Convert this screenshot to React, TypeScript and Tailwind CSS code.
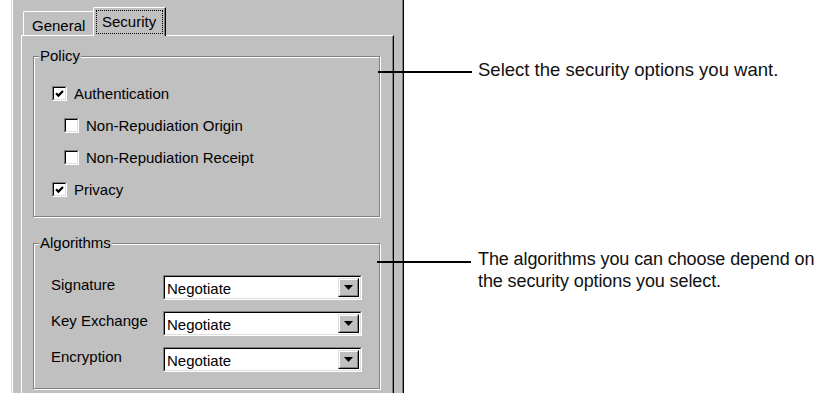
import * as React from "react";

const Checkbox = ({ checked }: { checked?: boolean }) => (
  <span className="flex h-[15px] w-[15px] shrink-0 border border-t-[#808080] border-l-[#808080] border-b-white border-r-white">
    <span className="flex flex-1 items-center justify-center border border-t-black border-l-black border-b-[#dfdfdf] border-r-[#dfdfdf] bg-white">
      {checked && (
        <svg width="11" height="11" viewBox="0 0 11 11">
          <path d="M2 5.2 L4.4 7.6 L9 3" fill="none" stroke="#000" strokeWidth="2.2" />
        </svg>
      )}
    </span>
  </span>
);

const CheckRow = ({ label, checked, indent }: { label: string; checked?: boolean; indent?: boolean }) => (
  <div className={`flex h-[32px] items-center gap-[7px] ${indent ? "pl-[30px]" : "pl-[18px]"}`}>
    <Checkbox checked={checked} />
    <span className="leading-[17px]">{label}</span>
  </div>
);

const Combo = ({ label, value }: { label: string; value: string }) => (
  <div className="flex h-[25px] items-start">
    <span className="w-[112px] pt-[1px] leading-[17px]">{label}</span>
    <div className="flex h-[25px] w-[199px] border border-t-[#808080] border-l-[#808080] border-b-white border-r-white">
      <div className="flex flex-1 items-stretch border border-t-black border-l-black border-b-[#dfdfdf] border-r-[#dfdfdf] bg-white">
        <span className="flex-1 pl-[2px] pt-[3px] leading-[17px]">{value}</span>
        <div className="my-px mr-px flex w-[21px] border border-t-[#dfdfdf] border-l-[#dfdfdf] border-b-black border-r-black">
          <div className="flex flex-1 items-center justify-center border border-t-white border-l-white border-b-[#808080] border-r-[#808080] bg-[#c0c0c0]">
            <svg width="9" height="5" viewBox="0 0 9 5">
              <polygon points="0,0 9,0 4.5,5" fill="#000" />
            </svg>
          </div>
        </div>
      </div>
    </div>
  </div>
);

const GroupBox = ({ title, className, children }: { title: string; className: string; children: React.ReactNode }) => (
  <div className={`relative w-[347px] border border-[#808080] shadow-[inset_1px_1px_0_#fff,1px_1px_0_#fff] ${className}`}>
    <span className="absolute -top-[10px] left-[5px] bg-[#c0c0c0] px-px leading-[17px]">{title}</span>
    {children}
  </div>
);

export default function App() {
  return (
    <div className="relative flex h-[393px] w-[826px] overflow-hidden bg-white text-[15px] text-black font-['Liberation_Sans',Arial,sans-serif]">
      {/* dialog */}
      <div className="ml-[11px] flex w-[393px] shrink-0 border-l border-r border-l-[#dfdfdf] border-r-black bg-[#c0c0c0]">
        <div className="flex flex-1 flex-col border-l border-r border-l-white border-r-[#808080] px-[8px]">
          {/* tabs */}
          <div className="flex h-[35px] items-end pl-[2px]">
            <div className="flex h-[24px] w-[72px] rounded-tl-[2px] border-l border-t border-white pl-[8px] pt-[5px] leading-[17px]">
              General
            </div>
            <div className="relative z-10 -mb-px -ml-[2px] flex h-[29px] w-[73px] flex-col rounded-tl-[2px] border-l border-r border-t border-l-white border-t-white border-r-black bg-[#c0c0c0] p-[2px] shadow-[inset_-1px_0_0_#808080]">
              <span className="flex-1 border border-dotted border-black pl-[5px] pt-[2px] leading-[17px]">Security</span>
            </div>
          </div>
          {/* panel */}
          <div className="flex flex-1 flex-col border-l border-r border-t border-l-white border-t-white border-r-black pl-[11px] pt-[20px] shadow-[inset_-1px_0_0_#808080]">
            <GroupBox title="Policy" className="h-[161px] shrink-0 pt-[20px]">
              <CheckRow label="Authentication" checked />
              <CheckRow label="Non-Repudiation Origin" indent />
              <CheckRow label="Non-Repudiation Receipt" indent />
              <CheckRow label="Privacy" checked />
            </GroupBox>
            <GroupBox title="Algorithms" className="mt-[26px] flex h-[146px] shrink-0 flex-col gap-[11px] pl-[17px] pt-[31px]">
              <Combo label="Signature" value="Negotiate" />
              <Combo label="Key Exchange" value="Negotiate" />
              <Combo label="Encryption" value="Negotiate" />
            </GroupBox>
          </div>
        </div>
      </div>

      {/* callouts */}
      <div className="flex flex-1 flex-col whitespace-nowrap pl-[74px] text-[18.5px] leading-[22px] text-[#111] font-['Liberation_Sans',Arial,sans-serif]">
        <p className="mt-[59px]">Select the security options you want.</p>
        <p className="mt-[167px] text-[18px] tracking-[-0.1px]">
          The algorithms you can choose depend on
          <br />
          the security options you select.
        </p>
      </div>

      <div className="absolute left-[378px] top-[71px] h-[2px] w-[94px] bg-black" />
      <div className="absolute left-[377px] top-[261px] h-[2px] w-[94px] bg-black" />
    </div>
  );
}
